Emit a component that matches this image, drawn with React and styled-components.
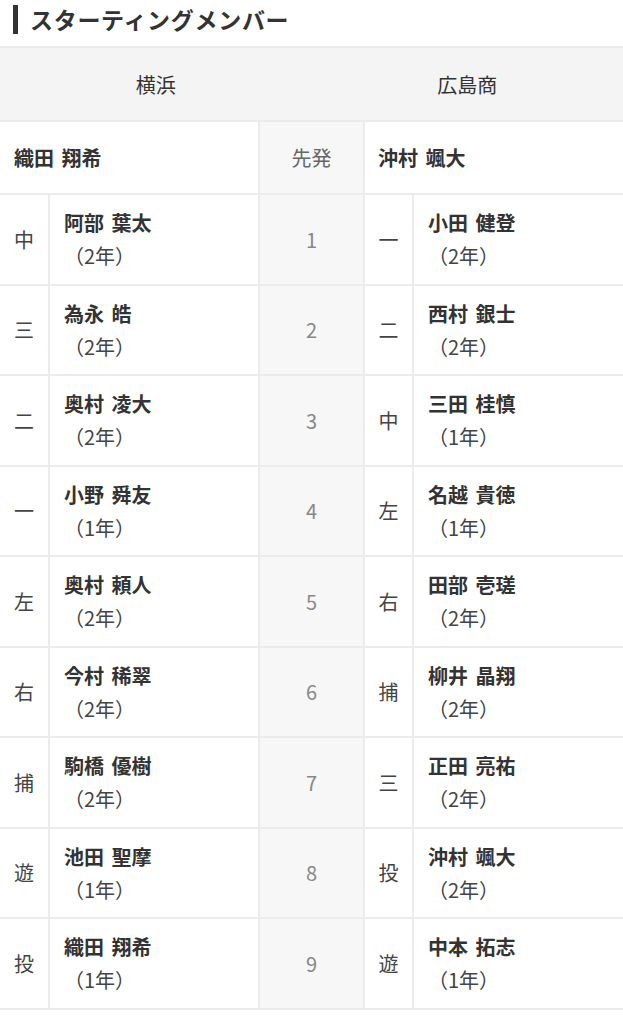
import React from 'react'
import styled, {createGlobalStyle} from 'styled-components'

const GlobalStyle = createGlobalStyle`
  body {
    margin: 0;
    background: #fff;
    font-family: "Noto Sans CJK JP", "Noto Sans", sans-serif;
    color: #333;
  }
`

const Page = styled.div`
  width: 623px;
`

const Title = styled.h2`
  margin: 5px 0 12px 13px;
  padding-left: 12px;
  border-left: 5px solid #333;
  font-size: 23px;
  line-height: 29px;
  font-weight: 700;
  color: #333;
  letter-spacing: 0.7px;
`

const Board = styled.div`
  display: flex;
  flex-direction: column;
  gap: 2px;
  padding: 2px 0;
  background: #ececec;
`

const TeamRow = styled.div`
  display: grid;
  grid-template-columns: 1fr 1fr;
  height: 72px;
  background: #f4f4f4;
`

const TeamName = styled.div`
  display: flex;
  align-items: center;
  justify-content: center;
  font-size: 20px;
  color: #333;
`

const Row = styled.div`
  display: grid;
  grid-template-columns: 48px 208px 103px 47px 1fr;
  column-gap: 2px;
  height: ${p => p.$h}px;
`

const Cell = styled.div`
  display: flex;
  align-items: center;
  justify-content: ${p => (p.$center ? 'center' : 'flex-start')};
  background: ${p => (p.$shade ? '#f7f7f7' : '#fff')};
  grid-column: ${p => p.$span || 'auto'};
  padding: ${p => (p.$pad ? `0 ${p.$pad}px` : '0')};
  font-size: 20px;
  color: ${p => p.$color || '#444'};
  font-weight: ${p => (p.$bold ? 700 : 400)};
  word-spacing: ${p => (p.$bold ? '3px' : 'normal')};
`

const Player = styled.div`
  display: flex;
  flex-direction: column;
  padding-left: 14px;
`

const Name = styled.span`
  font-size: 20px;
  line-height: 33px;
  font-weight: 700;
  color: #333;
  word-spacing: 3px;
`

const Grade = styled.span`
  font-size: 20px;
  line-height: 33px;
  color: #444;
`

const lineup = [
  ['中', '阿部 葉太', '2', '一', '小田 健登', '2'],
  ['三', '為永 皓', '2', '二', '西村 銀士', '2'],
  ['二', '奥村 凌大', '2', '中', '三田 桂慎', '1'],
  ['一', '小野 舜友', '1', '左', '名越 貴徳', '1'],
  ['左', '奥村 頼人', '2', '右', '田部 壱瑳', '2'],
  ['右', '今村 稀翠', '2', '捕', '柳井 晶翔', '2'],
  ['捕', '駒橋 優樹', '2', '三', '正田 亮祐', '2'],
  ['遊', '池田 聖摩', '1', '投', '沖村 颯大', '2'],
  ['投', '織田 翔希', '1', '遊', '中本 拓志', '1'],
]

export default function App() {
  return (
    <Page>
      <GlobalStyle />
      <Title>スターティングメンバー</Title>
      <Board>
        <TeamRow>
          <TeamName>横浜</TeamName>
          <TeamName>広島商</TeamName>
        </TeamRow>
        <Row $h={71}>
          <Cell $span="span 2" $pad={14} $bold $color="#333">織田 翔希</Cell>
          <Cell $shade $center $color="#666">先発</Cell>
          <Cell $span="span 2" $pad={13} $bold $color="#333">沖村 颯大</Cell>
        </Row>
        {lineup.map((r, i) => (
          <Row key={i} $h={88.5}>
            <Cell $center>{r[0]}</Cell>
            <Cell>
              <Player>
                <Name>{r[1]}</Name>
                <Grade>（{r[2]}年）</Grade>
              </Player>
            </Cell>
            <Cell $shade $center $color="#888">{i + 1}</Cell>
            <Cell $center>{r[3]}</Cell>
            <Cell>
              <Player>
                <Name>{r[4]}</Name>
                <Grade>（{r[5]}年）</Grade>
              </Player>
            </Cell>
          </Row>
        ))}
      </Board>
    </Page>
  )
}
